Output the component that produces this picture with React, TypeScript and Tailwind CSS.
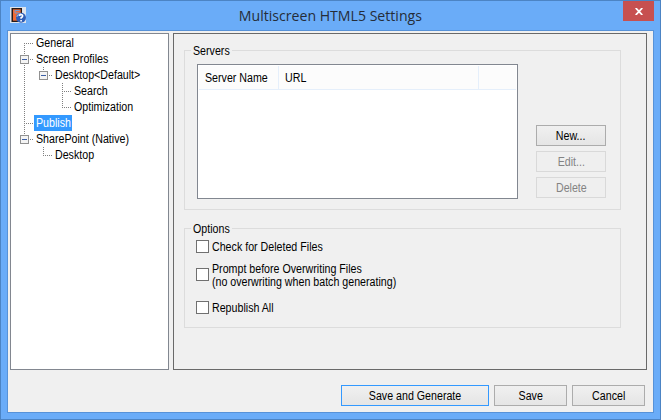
import { Fragment, type ReactNode } from "react";

type Node = { label: string; level: number; box?: boolean; selected?: boolean; last?: boolean; up?: boolean; trunk?: boolean };

const nodes: Node[] = [
  { label: "General", level: 0 },
  { label: "Screen Profiles", level: 0, box: true, up: true },
  { label: "Desktop<Default>", level: 1, box: true, up: true, last: true, trunk: true },
  { label: "Search", level: 2, up: true, trunk: true },
  { label: "Optimization", level: 2, up: true, last: true, trunk: true },
  { label: "Publish", level: 0, selected: true, up: true },
  { label: "SharePoint (Native)", level: 0, box: true, up: true, last: true },
  { label: "Desktop", level: 1, up: true, last: true },
];

function Text({ children, center = false }: { children: ReactNode; center?: boolean }) {
  return (
    <span className={`inline-block whitespace-nowrap scale-x-[0.888] ${center ? "origin-center" : "origin-left"}`}>
      {children}
    </span>
  );
}

function Gutter({ node }: { node: Node }) {
  const x = 13 + node.level * 19;
  const width = 25 + node.level * 19;
  return (
    <svg width={width} height="16" className="shrink-0" shapeRendering="crispEdges">
      <g stroke="#808080" strokeWidth="1" strokeDasharray="1 1" fill="none">
        {node.trunk && <path d="M13.5 0V16" />}
        {node.up && <path d={`M${x + 0.5} 0V8`} />}
        {!node.last && <path d={`M${x + 0.5} 8V16`} />}
        <path d={`M${x} 8.5H${x + 9}`} />
      </g>
      {node.box && (
        <Fragment>
          <rect x={x - 3.5} y="4.5" width="8" height="8" fill="#f4f4f4" stroke="#919191" />
          <path d={`M${x - 2} 8.5H${x + 3}`} stroke="#3b5fa5" />
        </Fragment>
      )}
    </svg>
  );
}

function Button({ label, className, disabled = false, primary = false }: { label: string; className: string; disabled?: boolean; primary?: boolean }) {
  const look = disabled
    ? "border-[#d9d9d9] bg-[#efefef] text-[#838383]"
    : primary
      ? "border-[#3399ff] bg-linear-to-b from-[#f0f0f0] to-[#e5e5e5]"
      : "border-[#acacac] bg-linear-to-b from-[#f0f0f0] to-[#e5e5e5]";
  return (
    <button className={`flex h-[21px] items-center justify-center border ${look} ${className}`}>
      <Text center>{label}</Text>
    </button>
  );
}

function Group({ title, className, children }: { title: string; className: string; children: ReactNode }) {
  return (
    <section className={`relative border border-[#dcdcdc] ${className}`}>
      <h2 className="absolute -top-2 left-[6px] h-4 w-[41px] bg-[#f0f0f0] pl-[2px] leading-4">
        <Text>{title}</Text>
      </h2>
      {children}
    </section>
  );
}

function Check({ children, className }: { children: ReactNode; className: string }) {
  return (
    <label className={`flex items-start gap-[3px] leading-[13px] ${className}`}>
      <span className="size-[13px] shrink-0 self-center border border-[#707070] bg-white" />
      <span className="pt-px"><Text>{children}</Text></span>
    </label>
  );
}

function AppIcon() {
  return (
    <svg width="16" height="16" viewBox="0 0 16 16">
      <path d="M0 0H16V16H0Z" fill="#dce3ec" />
      <path d="M1.5 1H12V15H1.5Z" fill="#241b1b" />
      <path d="M3 2.3H10.7V13.7H3Z" fill="#f06a34" />
      <path d="M9.5 3.5H5V6H9V8.5H6.5" fill="none" stroke="#7698cf" />
      <circle cx="11" cy="10.7" r="5" fill="#2f5fb8" />
      <path d="M6.8 10A4.4 4.4 0 0 1 11 6.4" fill="none" stroke="#8fb2e6" />
      <path d="M9.2 9Q9.4 7.6 11 7.6Q12.8 7.7 12.6 9.2Q12.5 10 11.1 10.8V11.8M11.1 13V14.5" fill="none" stroke="white" strokeWidth="1.6" />
    </svg>
  );
}

export default function App() {
  return (
    <div className="flex h-[420px] w-[661px] flex-col border border-[#4c84c4] bg-[#6aacf8] px-[6px] pb-[6px] font-['Liberation_Sans',Arial,sans-serif] text-[12px] text-black">
      <header className="flex h-[29px] shrink-0">
        <div className="w-[93px] pt-[6px] pl-[3px]"><AppIcon /></div>
        <h1 className="flex flex-1 justify-center pr-px font-['Open_Sans','Noto_Sans',sans-serif] text-[15px] leading-[29px] text-[#252d38]">
          <span className="inline-block scale-x-[0.94] whitespace-nowrap">Multiscreen HTML5 Settings</span>
        </h1>
        <button aria-label="Close" className="ml-[62px] flex h-5 w-[31px] items-center justify-center bg-[#c75050]">
          <svg width="8" height="7" viewBox="0 0 8 7"><path d="M0.7 0L7.3 7M7.3 0L0.7 7" stroke="white" strokeWidth="1.8" /></svg>
        </button>
      </header>
      <main className="flex flex-1 flex-col border border-[#5792d8] bg-[#f0f0f0] pt-[2px] pr-[6px] pl-[2px]">
        <div className="flex h-[337px] gap-1">
          <nav className="w-[159px] shrink-0 border border-[#828790] bg-white pt-px">
            {nodes.map((node, i) => (
              <div key={i} className="flex h-4 leading-4">
                <Gutter node={node} />
                {node.selected ? (
                  <span className="-ml-[2px] w-[38px] bg-[#3399ff] pl-[2px] text-white"><Text>{node.label}</Text></span>
                ) : (
                  <Text>{node.label}</Text>
                )}
              </div>
            ))}
          </nav>
          <div className="flex w-[474px] shrink-0 flex-col border border-[#696969] pt-4 pl-[10px]">
            <Group title="Servers" className="flex h-[160px] w-[437px] pt-[13px] pl-3">
              <div className="h-[135px] w-[321px] border border-[#828790] bg-white px-px pt-px">
                <div className="flex h-6 border-b border-[#e5effb] bg-[#fcfcfc] leading-6">
                  <div className="w-20 border-r border-[#e5effb] pl-[6px]"><Text>Server Name</Text></div>
                  <div className="w-[200px] border-r border-[#e5effb] pl-[6px]"><Text>URL</Text></div>
                </div>
              </div>
              <div className="flex flex-col gap-[5px] pt-[61px] pl-[18px]">
                <Button label="New..." className="w-[70px]" />
                <Button label="Edit..." className="w-[70px]" disabled />
                <Button label="Delete" className="w-[70px]" disabled />
              </div>
            </Group>
            <Group title="Options" className="mt-[18px] flex h-[100px] w-[437px] flex-col pt-[11px] pl-[11px]">
              <Check className="h-[13px]">Check for Deleted Files</Check>
              <Check className="mt-[9px] h-[25px]">
                Prompt before Overwriting Files<br />(no overwriting when batch generating)
              </Check>
              <Check className="mt-[14px] h-[13px]">Republish All</Check>
            </Group>
          </div>
        </div>
        <footer className="flex justify-end gap-[5px] pt-[15px] pr-[2px]">
          <Button label="Save and Generate" className="w-[148px]" primary />
          <Button label="Save" className="w-[73px]" />
          <Button label="Cancel" className="w-[73px]" />
        </footer>
      </main>
    </div>
  );
}
